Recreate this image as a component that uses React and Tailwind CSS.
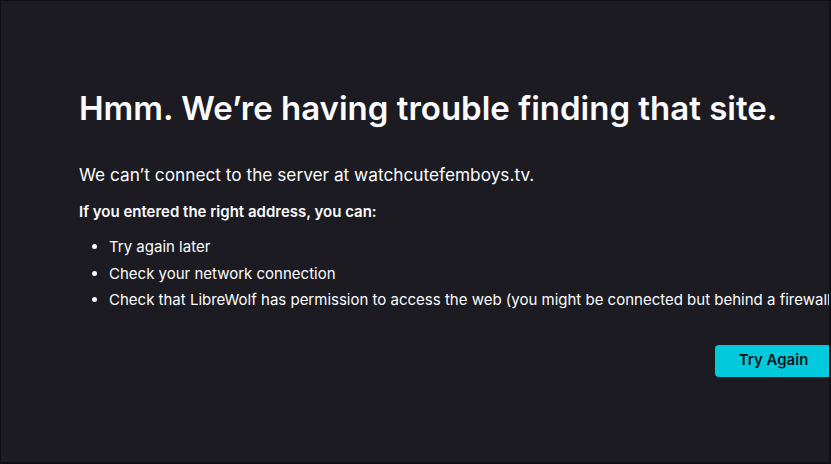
import React from 'react';

export default function App() {
  const items = [
    "Try again later",
    "Check your network connection",
    "Check that LibreWolf has permission to access the web (you might be connected but behind a firewall)",
  ];

  return (
    <div className="w-[831px] h-[464px] overflow-hidden bg-[#1c1b22] border-t border-l border-r-2 border-b-2 border-[#0f0f13] text-[#fbfbfe] font-['Inter',sans-serif]">
      <div className="ml-[78px] w-[753px] pt-[87px] flex flex-col">
        <h1 className="text-[33px] leading-[40px] font-semibold whitespace-nowrap">
          Hmm. We’re having trouble finding that site.
        </h1>
        <p className="mt-[34px] text-[17.25px] leading-[26px] whitespace-nowrap">
          We can’t connect to the server at watchcutefemboys.tv.
        </p>
        <p className="mt-[14px] text-[15px] leading-[20px] font-semibold whitespace-nowrap">
          If you entered the right address, you can:
        </p>
        <ul className="mt-[12px] pl-[30px] list-disc text-[15px] leading-[26.5px] whitespace-nowrap">
          {items.map((item, i) => (
            <li key={i}>{item}</li>
          ))}
        </ul>
        <div className="mt-[31px] flex justify-end">
          <button className="h-[32px] w-[117px] rounded-[4px] bg-[#00cadb] text-[#15141a] text-[15px] font-semibold">
            Try Again
          </button>
        </div>
      </div>
    </div>
  );
}
